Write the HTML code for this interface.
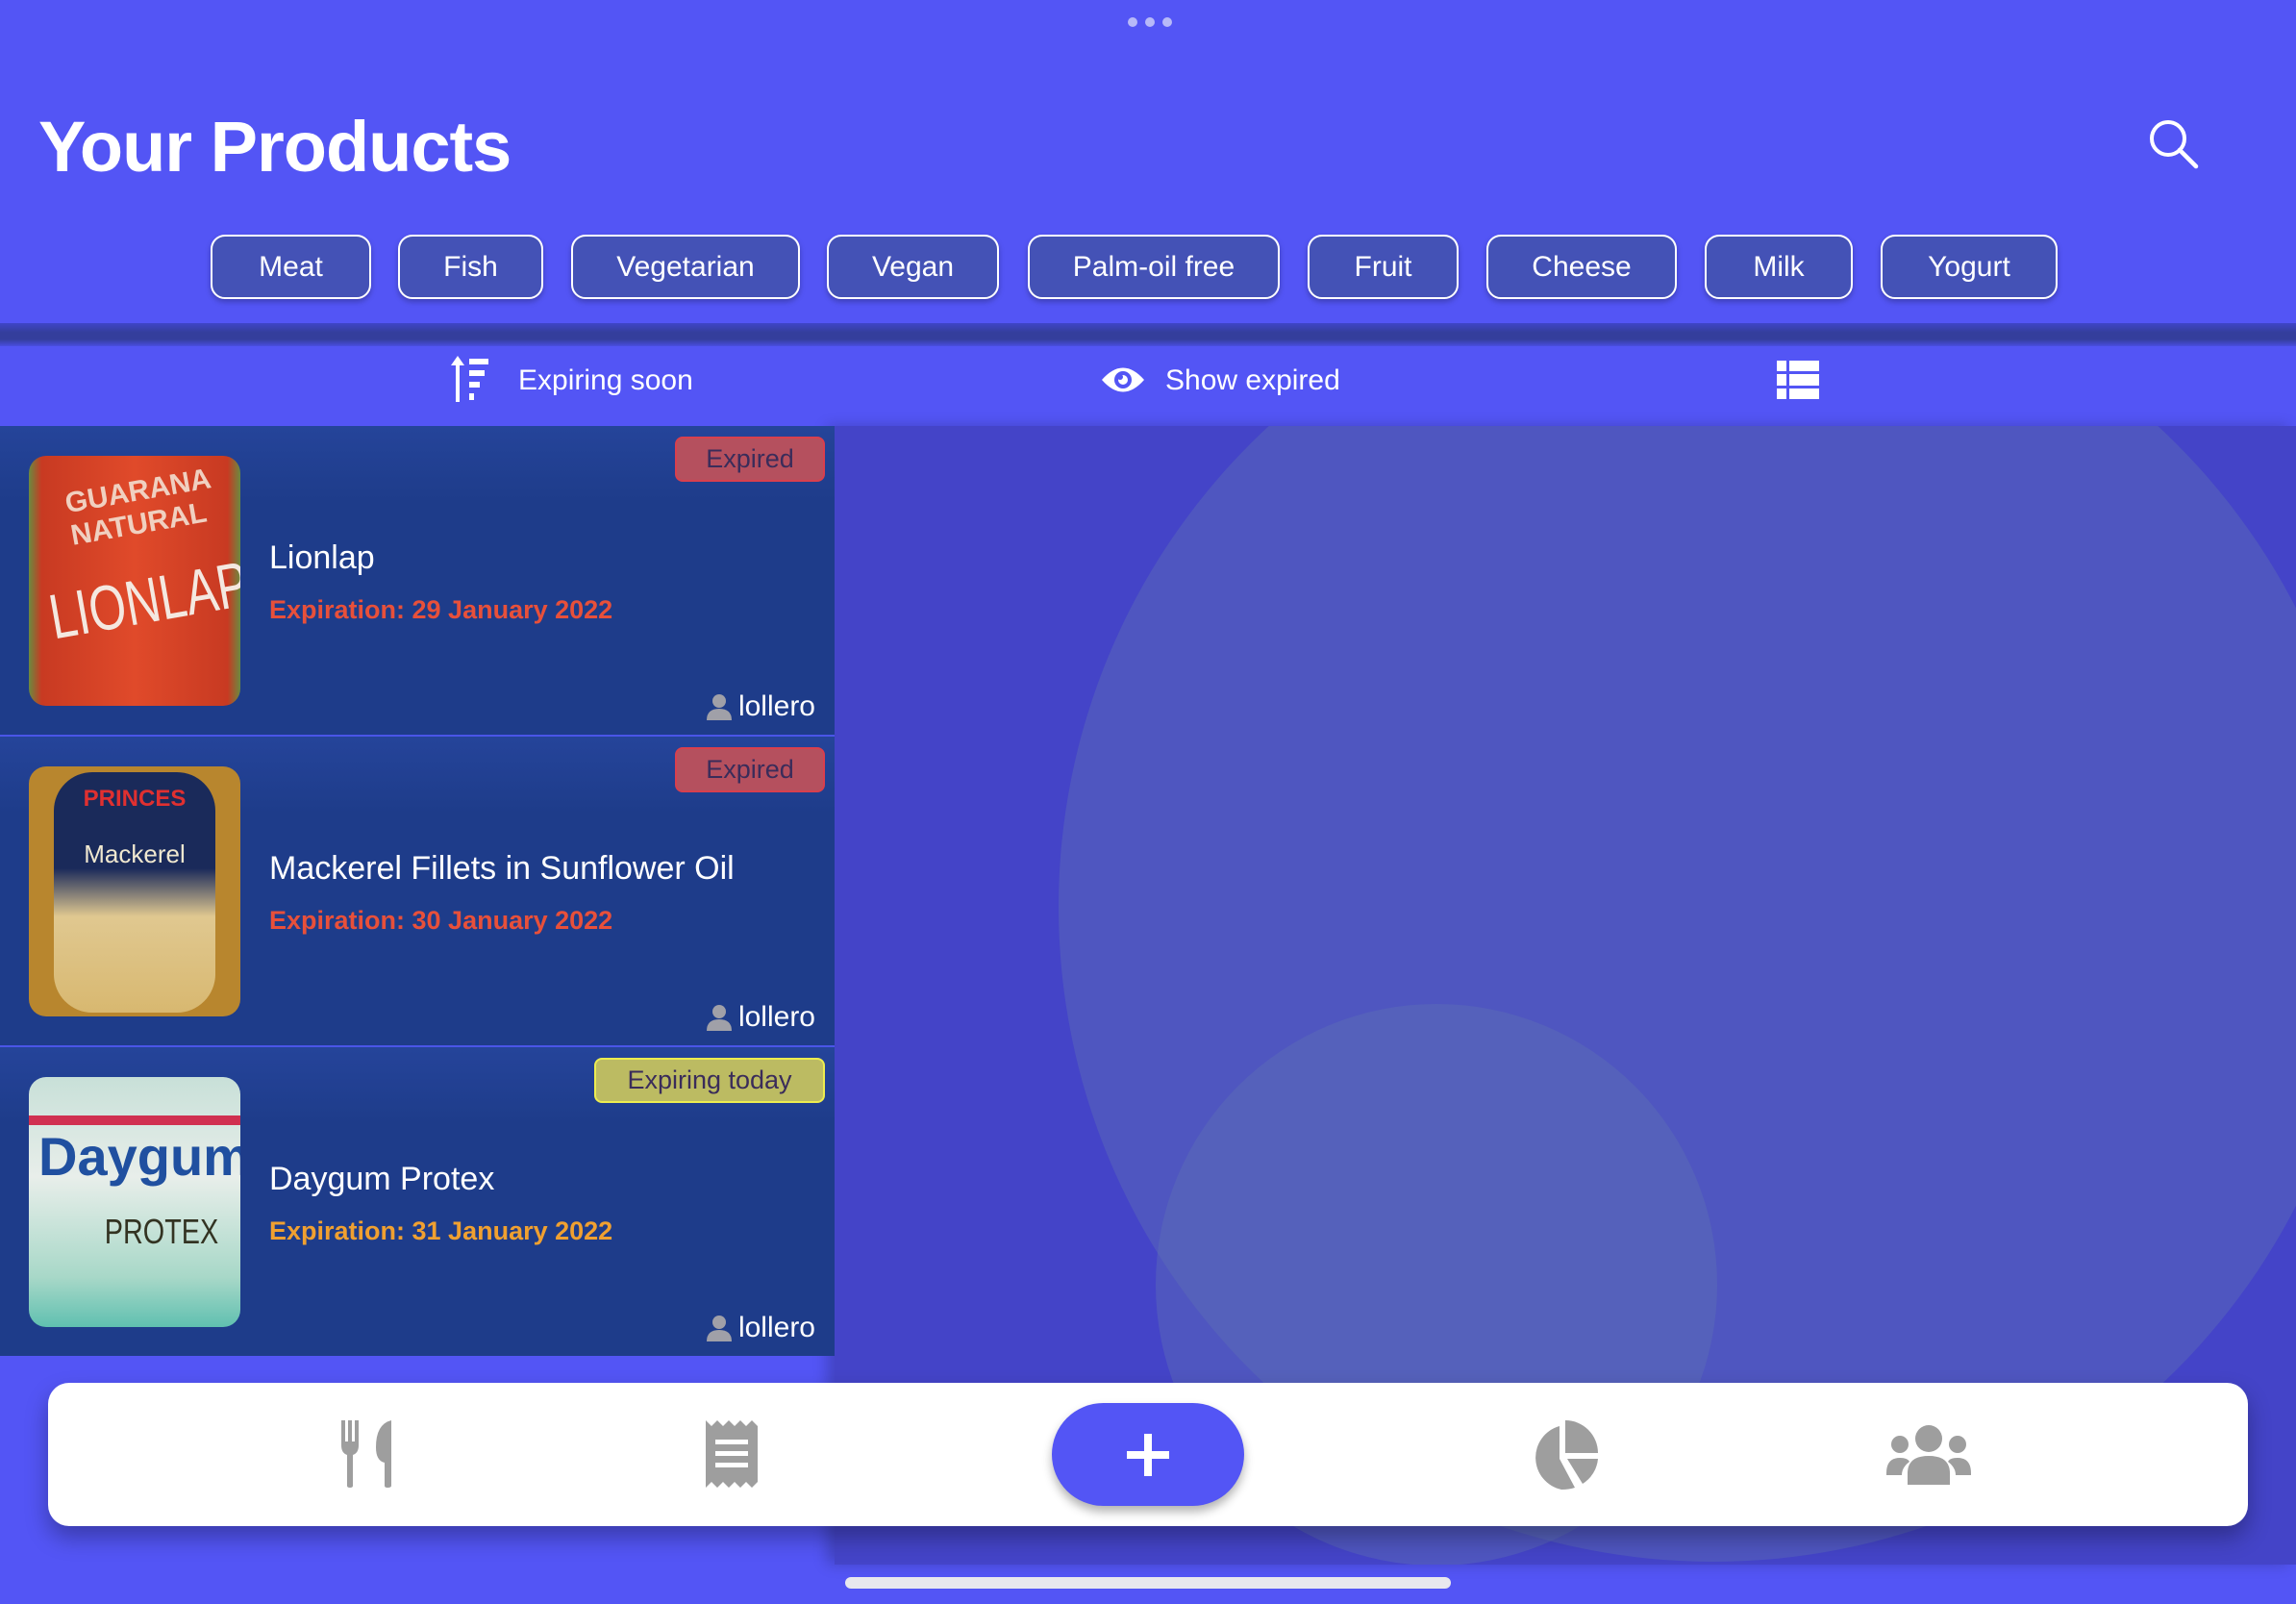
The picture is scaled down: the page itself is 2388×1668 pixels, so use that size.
<!DOCTYPE html>
<html><head><meta charset="utf-8"><style>
*{margin:0;padding:0;box-sizing:border-box}
body{width:2388px;height:1668px;background:#5355f5;position:relative;overflow:hidden;font-family:"Liberation Sans",sans-serif;color:#fff}
.abs{position:absolute}
.dots{left:1173px;top:18px;display:flex;gap:8px}
.dots i{width:10px;height:10px;border-radius:50%;background:#b7b9f8;display:block}
h1{position:absolute;left:40px;top:110px;font-size:74px;font-weight:bold;letter-spacing:-1px}
.chip{position:absolute;top:244px;height:67px;border:2.5px solid #fff;border-radius:15px;background:#4452b6;font-size:30px;display:flex;align-items:center;justify-content:center;box-shadow:0 3px 6px rgba(0,0,0,.25)}
.band{left:0;top:336px;width:2388px;height:24px;background:linear-gradient(#3f45c8,#343e9c 40%,#343e9c 70%,#4a4ee0)}
.tb{font-size:30px;top:379px}
.right{left:868px;top:443px;width:1520px;height:1184px;background:#4444c8;overflow:hidden;box-shadow:-8px 0 14px rgba(0,0,0,.2)}
.circ{position:absolute;border-radius:50%;background:rgba(96,112,180,.42)}
.panel{left:0;top:443px;width:868px;height:966px;background:#1f3d8a}
.card{position:absolute;left:0;width:868px;height:321px;background:linear-gradient(#25449a,#1e3c8a 25%)}
.img{position:absolute;left:30px;top:31px;width:220px;height:260px;border-radius:18px;overflow:hidden}
.name{position:absolute;left:280px;top:118px;font-size:34px}
.exp{position:absolute;left:280px;top:176px;font-size:27px;font-weight:bold;color:#e8503a}
.badge{position:absolute;top:11px;right:10px;height:47px;border-radius:8px;font-size:27px;color:#3a2c5a;display:flex;align-items:center;justify-content:center}
.user{position:absolute;right:20px;bottom:12px;font-size:30px;display:flex;align-items:center;gap:6px}
.tab{left:50px;top:1438px;width:2288px;height:149px;background:#fff;border-radius:22px;box-shadow:0 12px 24px rgba(0,0,0,.3)}
.plus{left:1094px;top:1459px;width:200px;height:107px;border-radius:54px;background:#5355f5;box-shadow:0 6px 10px rgba(0,0,0,.3)}
</style></head><body>
<div class="abs dots"><i></i><i></i><i></i></div>
<h1>Your Products</h1>
<svg class="abs" style="left:2234px;top:123px" width="54" height="54" viewBox="0 0 54 54"><circle cx="21" cy="21" r="17" fill="none" stroke="#fff" stroke-width="4"/><line x1="33" y1="33" x2="50" y2="50" stroke="#fff" stroke-width="4.5" stroke-linecap="round"/></svg>
<div class="chip" style="left:219px;width:167px">Meat</div>
<div class="chip" style="left:414px;width:151px">Fish</div>
<div class="chip" style="left:594px;width:238px">Vegetarian</div>
<div class="chip" style="left:860px;width:179px">Vegan</div>
<div class="chip" style="left:1069px;width:262px">Palm-oil free</div>
<div class="chip" style="left:1360px;width:157px">Fruit</div>
<div class="chip" style="left:1546px;width:198px">Cheese</div>
<div class="chip" style="left:1773px;width:154px">Milk</div>
<div class="chip" style="left:1956px;width:184px">Yogurt</div>
<div class="abs band"></div>

<svg class="abs" style="left:468px;top:370px" width="52" height="48" viewBox="0 0 52 48"><path d="M8 0 L15 10 H10 V48 H6 V10 H1Z" fill="#fff"/><rect x="20" y="3" width="20" height="6" fill="#fff"/><rect x="20" y="15" width="16" height="6" fill="#fff"/><rect x="20" y="27" width="11" height="6" fill="#fff"/><rect x="20" y="39" width="5" height="7" fill="#fff"/></svg>
<div class="abs tb" style="left:539px">Expiring soon</div>
<svg class="abs" style="left:1144px;top:378px" width="48" height="34" viewBox="0 0 48 34"><path d="M2 17 Q24 -8 46 17 Q24 42 2 17Z" fill="#fff"/><circle cx="24" cy="17" r="9" fill="#5355f5"/><circle cx="24" cy="17" r="5" fill="#fff"/><circle cx="21" cy="14" r="3" fill="#5355f5"/></svg>
<div class="abs tb" style="left:1212px">Show expired</div>
<svg class="abs" style="left:1848px;top:375px" width="44" height="40" viewBox="0 0 44 40"><g fill="#fff"><rect x="0" y="0" width="10" height="11"/><rect x="13" y="0" width="31" height="11"/><rect x="0" y="14" width="10" height="12"/><rect x="13" y="14" width="31" height="12"/><rect x="0" y="29" width="10" height="11"/><rect x="13" y="29" width="31" height="11"/></g></svg>

<div class="abs right">
<div class="circ" style="left:233px;top:-181px;width:1362px;height:1362px"></div>
<div class="circ" style="left:334px;top:601px;width:584px;height:584px"></div>
</div>

<div class="abs panel">
<div class="card" style="top:0">
<div class="img" style="background:linear-gradient(90deg,#6a8a40 0,#c83a22 6%,#e04a2a 50%,#c83a22 94%,#6a8a40 100%)"><div style="position:absolute;left:40px;top:20px;font-size:30px;font-weight:bold;color:#f0d0c0;transform:rotate(-10deg)">GUARANA<br>NATURAL</div><div style="position:absolute;left:22px;top:130px;font-size:66px;color:#f4e8e0;transform:rotate(-10deg) scaleX(.75);transform-origin:left">LIONLAP</div></div>
<div class="name">Lionlap</div>
<div class="exp">Expiration: 29 January 2022</div>
<div class="badge" style="width:156px;background:#b5505e;border:2px solid #d8404e">Expired</div>
<div class="user"><svg width="28" height="28" viewBox="0 0 28 28"><circle cx="14" cy="8" r="7" fill="#a0a0a8"/><path d="M1 28 Q1 16 14 16 Q27 16 27 28Z" fill="#a0a0a8"/></svg>lollero</div>
</div>
<div class="abs" style="top:321px;left:0;width:868px;height:2px;background:#4a55e8"></div>
<div class="card" style="top:323px">
<div class="img" style="background:#b8862e"><div style="position:absolute;left:26px;top:6px;width:168px;height:250px;border-radius:40px;background:linear-gradient(#1a2a5a 0,#1a2a5a 40%,#e0c890 60%,#d8b870)"><div style="position:absolute;top:14px;width:100%;text-align:center;color:#e03030;font-weight:bold;font-size:24px">PRINCES</div><div style="position:absolute;top:70px;width:100%;text-align:center;color:#f0e8d0;font-size:26px">Mackerel</div></div></div>
<div class="name">Mackerel Fillets in Sunflower Oil</div>
<div class="exp">Expiration: 30 January 2022</div>
<div class="badge" style="width:156px;background:#b5505e;border:2px solid #d8404e">Expired</div>
<div class="user"><svg width="28" height="28" viewBox="0 0 28 28"><circle cx="14" cy="8" r="7" fill="#a0a0a8"/><path d="M1 28 Q1 16 14 16 Q27 16 27 28Z" fill="#a0a0a8"/></svg>lollero</div>
</div>
<div class="abs" style="top:644px;left:0;width:868px;height:2px;background:#4a55e8"></div>
<div class="card" style="top:646px">
<div class="img" style="background:linear-gradient(#c8e0d8,#e8eeea 40%,#a8d8c8 80%,#60c0b0)"><div style="position:absolute;top:40px;left:0;width:100%;height:10px;background:#d03050"></div><div style="position:absolute;left:10px;top:50px;font-size:56px;font-weight:bold;color:#2050a0">Daygum</div><div style="position:absolute;left:64px;top:140px;font-size:36px;color:#332;transform:scaleX(.8)">PROTEX</div></div>
<div class="name">Daygum Protex</div>
<div class="exp" style="color:#f0a030">Expiration: 31 January 2022</div>
<div class="badge" style="width:240px;background:#bcbb62;border:2px solid #ecec50">Expiring today</div>
<div class="user"><svg width="28" height="28" viewBox="0 0 28 28"><circle cx="14" cy="8" r="7" fill="#a0a0a8"/><path d="M1 28 Q1 16 14 16 Q27 16 27 28Z" fill="#a0a0a8"/></svg>lollero</div>
</div>
</div>

<div class="abs tab"></div>
<svg class="abs" style="left:353px;top:1477px" width="58" height="70" viewBox="0 0 58 70"><g fill="#9e9e9e"><path d="M2 0 H6 V22 H9 V0 H13 V22 H16 V0 H20 V26 Q20 34 14 36 V68 Q14 70 11 70 Q8 70 8 68 V36 Q2 34 2 26Z"/><path d="M54 0 V68 Q54 70 50 70 Q47 70 47 68 V44 Q38 42 38 28 Q38 4 54 0Z"/></g></svg>
<svg class="abs" style="left:734px;top:1477px" width="54" height="70" viewBox="0 0 54 70"><path d="M0 0 L6 6 L12 0 L18 6 L24 0 L30 6 L36 0 L42 6 L48 0 L54 6 V64 L48 70 L42 64 L36 70 L30 64 L24 70 L18 64 L12 70 L6 64 L0 70Z" fill="#9e9e9e"/><g fill="#fff"><rect x="10" y="20" width="34" height="5"/><rect x="10" y="32" width="34" height="5"/><rect x="10" y="44" width="34" height="5"/></g></svg>
<div class="abs plus"></div>
<svg class="abs" style="left:1170px;top:1489px" width="48" height="48" viewBox="0 0 48 48"><path d="M20 2 H28 V20 H46 V28 H28 V46 H20 V28 H2 V20 H20Z" fill="#fff"/></svg>
<svg class="abs" style="left:1588px;top:1477px" width="76" height="72" viewBox="0 0 76 72"><g fill="#9e9e9e"><path d="M34 6 V40 L50 70 Q44 72 36 72 A34 34 0 0 1 34 6Z"/><path d="M40 0 A34 34 0 0 1 74 34 H40Z"/><path d="M42 40 H74 A34 34 0 0 1 58 66Z"/></g></svg>
<svg class="abs" style="left:1962px;top:1482px" width="88" height="62" viewBox="0 0 88 62"><g fill="#9e9e9e"><circle cx="44" cy="14" r="14"/><circle cx="14" cy="20" r="9"/><circle cx="74" cy="20" r="9"/><path d="M22 62 V50 Q22 32 44 32 Q66 32 66 50 V62Z"/><path d="M0 50 Q0 34 14 34 Q22 34 24 38 Q16 44 16 52 H0Z"/><path d="M88 50 Q88 34 74 34 Q66 34 64 38 Q72 44 72 52 H88Z"/></g></svg>
<div class="abs" style="left:879px;top:1640px;width:630px;height:12px;border-radius:6px;background:#e8e8ee"></div>
</body></html>
